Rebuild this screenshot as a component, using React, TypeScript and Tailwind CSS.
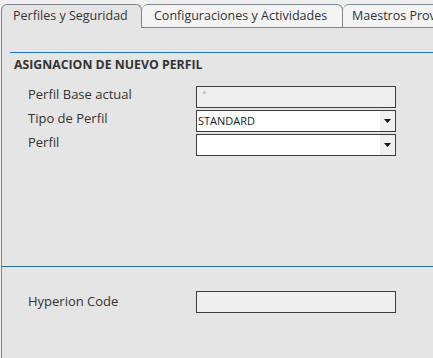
import React from "react"

function Arrow() {
  return (
    <span className="flex h-full w-[15px] items-center justify-center bg-[#f0f0f0]">
      <svg width="7" height="4" viewBox="0 0 7 4">
        <path d="M0 0 H7 L3.5 4 Z" fill="#111" />
      </svg>
    </span>
  )
}

function Row({ label, raised = true, children }: { label: string; raised?: boolean; children: React.ReactNode }) {
  return (
    <div className="flex h-[22px] items-center">
      <div className={raised ? "w-[194px] pb-[4px] pl-[26px] text-[13px]" : "w-[194px] pb-px pl-[26px] text-[13px]"}>{label}</div>
      {children}
    </div>
  )
}

export default function App() {
  return (
    <div className="h-[358px] w-[433px] overflow-hidden bg-[#f0f0f0] font-['Open_Sans',sans-serif] text-[12px] text-[#333]">
      <div className="flex h-7 items-end whitespace-nowrap text-[12.5px]">
        <div className="ml-px h-6 w-[141px] shrink-0 rounded-t-[6px] border border-b-0 border-[#7d878e] bg-[#e5e5e5] pl-[11px] leading-[22px]">
          Perfiles y Seguridad
        </div>
        <div className="h-6 w-[201px] shrink-0 rounded-t-[6px] border border-l-0 border-[#7d878e] bg-[#f4f4f4] pl-3 leading-[22px]">
          Configuraciones y Actividades
        </div>
        <div className="h-6 w-[90px] shrink-0 overflow-hidden rounded-tl-[6px] border border-l-0 border-r-0 border-[#7d878e] bg-[#f4f4f4] pl-[9px] leading-[22px]">
          Maestros Prov
        </div>
      </div>
      <div className="ml-px h-[330px] border-l border-[#7d878e] bg-[#e5e5e5]">
        <div className="pt-6">
          <div className="ml-[8px] h-px bg-[#1f74bf]" />
          <div className="pl-[12px] pt-[4px] text-[12.3px] font-bold leading-4">ASIGNACION DE NUEVO PERFIL</div>
        </div>
        <div className="mt-[13px] flex flex-col gap-[2px]">
          <Row label="Perfil Base actual">
            <div className="h-[22px] w-[200px] border border-[#3d3d3d] bg-[#efefef] pl-[5px] text-[8px] leading-[12px] text-[#aaa]">*</div>
          </Row>
          <Row label="Tipo de Perfil">
            <div className="flex h-[22px] w-[200px] items-center justify-between border border-[#3d3d3d] bg-white">
              <span className="pl-px text-[11px] text-[#222]">STANDARD</span>
              <Arrow />
            </div>
          </Row>
          <Row label="Perfil">
            <div className="flex h-[22px] w-[200px] items-center justify-end border border-[#3d3d3d] bg-white">
              <Arrow />
            </div>
          </Row>
        </div>
        <div className="mt-[110px] h-px bg-[#2c6ea3]" />
        <div className="mt-6">
          <Row label="Hyperion Code" raised={false}>
            <div className="h-[22px] w-[200px] border border-[#3d3d3d] bg-[#efefef]" />
          </Row>
        </div>
      </div>
    </div>
  )
}
